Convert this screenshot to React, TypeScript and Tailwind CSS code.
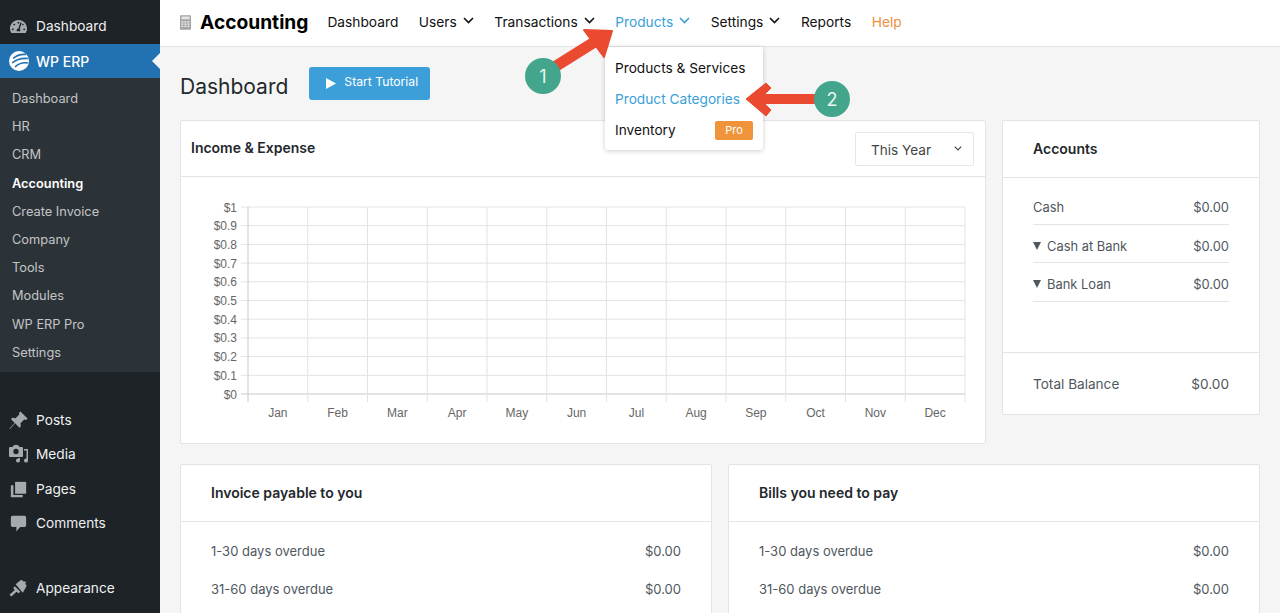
import { FaTachometerAlt } from "react-icons/fa";

const submenu = ["Dashboard", "HR", "CRM", "Accounting", "Create Invoice", "Company", "Tools", "Modules", "WP ERP Pro", "Settings"];
const months = ["Jan", "Feb", "Mar", "Apr", "May", "Jun", "Jul", "Aug", "Sep", "Oct", "Nov", "Dec"];
const ticks = ["$1", "$0.9", "$0.8", "$0.7", "$0.6", "$0.5", "$0.4", "$0.3", "$0.2", "$0.1", "$0"];

function PinIcon() {
  return (
    <svg viewBox="0 0 20 20" className="size-[19px]" fill="#a7aaad">
      <path d="M12 0.500L19.500 8 18 9.500 16 9 12 13 12.500 16 11 17.500 6.500 13 1 19 0.500 18.500 6 12.500 2 8.500 3.500 7 7 7.500 11 3.500 10.500 2z" />
    </svg>
  );
}

function MediaIcon() {
  return (
    <svg viewBox="0 0 19 19" className="size-[19px]" fill="#a7aaad">
      <path
        fillRule="evenodd"
        d="M1 2h2.500L5 0h4l1.500 2H13a1 1 0 0 1 1 1v8a1 1 0 0 1-1 1H1a1 1 0 0 1-1-1V3a1 1 0 0 1 1-1zm6 1.800a2.700 2.700 0 1 0 0 5.400 2.700 2.700 0 0 0 0-5.400z"
      />
      <path d="M15 4h4v11.500a2 2 0 1 1-1.500-1.900V5.500H15z" />
      <path d="M9.500 13H11v2.500a2 2 0 1 1-1.500-1.900z" />
    </svg>
  );
}

function PagesIcon() {
  return (
    <svg viewBox="0 0 20 20" className="size-[17px]" fill="#a7aaad">
      <path d="M6 1h13v14H6z" />
      <path d="M1 5h3v11.500h11V19H1z" />
    </svg>
  );
}

function CommentIcon() {
  return (
    <svg viewBox="0 0 20 20" className="size-[17px]" fill="#a7aaad">
      <path d="M3 1h14a2 2 0 0 1 2 2v9a2 2 0 0 1-2 2h-5l-4.500 5.500V14H3a2 2 0 0 1-2-2V3a2 2 0 0 1 2-2z" />
    </svg>
  );
}

function BrushIcon() {
  return (
    <svg viewBox="0 0 20 20" className="size-[19px]" fill="#a7aaad">
      <path d="M7 5.500L12.500 1l2 .500 1 1.500 2-.500.500 1.500-1 1 1.500 1.500-.500 2-3.500 6z" />
      <path d="M6 7.500l6 6-2 1.500-2-1.500-5.500 5L.500 16.500 6 11.500 4.500 9.500z" />
    </svg>
  );
}

function ErpLogo() {
  return (
    <svg viewBox="0 0 20 20" className="size-[20px]">
      <circle cx="10" cy="10" r="10" fill="#fff" />
      <path d="M4 7.500C8 4 12 3 17 3.500M3 12C8 8 13 7 19 7.500M6 16C10 12 14 11 19 12" stroke="#2271b1" strokeWidth="1.600" fill="none" />
    </svg>
  );
}

function CalculatorIcon() {
  return (
    <svg viewBox="0 0 12 16" className="h-[15px] w-[11px]">
      <rect width="12" height="16" rx="1" fill="#a3a3a3" />
      <rect x="1.500" y="1.500" width="9" height="3" fill="#e5e5e5" />
      {[6.5, 9, 11.5].map((y) =>
        [1.5, 4.8, 8.1].map((x) => <rect key={`${x}-${y}`} x={x} y={y} width="2.200" height="1.500" fill="#efefef" />)
      )}
    </svg>
  );
}

function Caret({ className }: { className: string }) {
  return (
    <svg viewBox="0 0 11 7" className={className} fill="none" stroke="currentColor" strokeWidth="1.600">
      <path d="M1 1l4.500 4.500L10 1" />
    </svg>
  );
}

function MenuRow({ icon, label }: { icon: React.ReactNode; label: string }) {
  return (
    <div className="flex h-[34.500px] items-center text-[13.7px] text-[#f0f0f1]">
      <span className="flex w-[36px] shrink-0 justify-center pl-[1px]">{icon}</span>
      {label}
    </div>
  );
}

function Sidebar() {
  return (
    <aside className="flex w-[160px] shrink-0 flex-col bg-[#1d2327]">
      <div className="flex h-[44px] items-center pt-[8px] text-[13.7px] text-[#f0f0f1]">
        <span className="flex w-[36px] shrink-0 justify-center">
          <FaTachometerAlt className="size-[17px] text-[#a7aaad]" />
        </span>
        Dashboard
      </div>
      <div className="relative flex h-[34px] items-center bg-[#2271b1] text-[14px] font-medium text-white">
        <span className="flex w-[36px] shrink-0 justify-center pl-[2px]">
          <ErpLogo />
        </span>
        WP ERP
        <span className="absolute right-0 top-[9px] border-y-[8px] border-r-[8px] border-y-transparent border-r-[#f5f5f5]" />
      </div>
      <div className="flex h-[294px] flex-col bg-[#2c3338] pt-[6.600px]">
        {submenu.map((item) => (
          <div
            key={item}
            className={`flex h-[28.200px] items-center pl-[12px] text-[12.8px] ${item === "Accounting" ? "font-semibold text-white" : "text-[#c3c4c7]"}`}
          >
            {item}
          </div>
        ))}
      </div>
      <div className="mt-[31px]">
        <MenuRow icon={<PinIcon />} label="Posts" />
        <MenuRow icon={<MediaIcon />} label="Media" />
        <MenuRow icon={<PagesIcon />} label="Pages" />
        <MenuRow icon={<CommentIcon />} label="Comments" />
      </div>
      <div className="mt-[30px]">
        <MenuRow icon={<BrushIcon />} label="Appearance" />
      </div>
    </aside>
  );
}

function NavItem({ label, caret, className }: { label: string; caret?: boolean; className?: string }) {
  return (
    <span className={`flex items-center gap-[6px] ${className ?? "text-[#111]"}`}>
      {label}
      {caret && <Caret className="mb-[3px] h-[7px] w-[11px]" />}
    </span>
  );
}

function TopBar() {
  return (
    <header className="flex h-[47px] items-center border-b border-[#e2e4e7] bg-white pb-[2px] pl-[20px]">
      <CalculatorIcon />
      <h1 className="ml-[9px] mr-[19px] text-[19.2px] font-bold text-black">Accounting</h1>
      <nav className="flex items-center gap-[20.500px] text-[13.75px]">
        <NavItem label="Dashboard" />
        <NavItem label="Users" caret />
        <NavItem label="Transactions" caret />
        <NavItem label="Products" caret className="text-[#3a9fd8]" />
        <NavItem label="Settings" caret />
        <NavItem label="Reports" />
        <NavItem label="Help" className="text-[#ee8f3c]" />
      </nav>
    </header>
  );
}

function Chart() {
  const left = 248;
  const right = 965;
  const top = 207;
  const bottom = 394;
  const stepY = (bottom - top) / 10;
  const stepX = (right - left) / 12;
  return (
    <svg width="804" height="266" viewBox="181 177 804 266" className="block font-['Liberation_Sans',sans-serif]">
      {ticks.map((t, i) => {
        const y = top + i * stepY;
        return (
          <g key={t}>
            <line x1={241} x2={right} y1={y} y2={y} stroke={i === 10 ? "#c9c9c9" : "#e3e3e3"} />
            <text x={237} y={y + 4.500} textAnchor="end" fontSize="12" fill="#666">
              {t}
            </text>
          </g>
        );
      })}
      {months.map((m, i) => {
        const x = left + i * stepX;
        return (
          <g key={m}>
            <line x1={x} x2={x} y1={top} y2={402} stroke={i === 0 ? "#c9c9c9" : "#e3e3e3"} />
            <text x={x + stepX / 2} y={417} textAnchor="middle" fontSize="12" fill="#666">
              {m}
            </text>
          </g>
        );
      })}
      <line x1={right} x2={right} y1={top} y2={402} stroke="#e3e3e3" />
    </svg>
  );
}

function AccountRow({ label, caret, className }: { label: string; caret?: boolean; className: string }) {
  return (
    <div className={`flex items-end justify-between border-b border-[#e3e4e6] text-[12.9px] text-[#50575e] ${className}`}>
      <span className="flex items-center gap-[6px]">
        {caret && <span className="h-0 w-0 border-x-[4.500px] border-t-[8px] border-x-transparent border-t-[#50575e]" />}
        {label}
      </span>
      <span>$0.00</span>
    </div>
  );
}

function PayCard({ title }: { title: string }) {
  return (
    <section className="h-[200px] flex-1 rounded-[2px] border border-[#e2e4e7] bg-white">
      <h3 className="flex h-[57px] items-center border-b border-[#e2e4e7] pb-[2px] pl-[30px] text-[14px] font-semibold text-[#23282d]">{title}</h3>
      <div className="px-[30px] pt-[11px] text-[13px] text-[#50575e]">
        <div className="flex h-[38px] items-center justify-between">
          <span>1-30 days overdue</span>
          <span>$0.00</span>
        </div>
        <div className="flex h-[38px] items-center justify-between">
          <span>31-60 days overdue</span>
          <span>$0.00</span>
        </div>
      </div>
    </section>
  );
}

function Annotations() {
  return (
    <svg className="pointer-events-none absolute left-0 top-0" width="1280" height="613" viewBox="0 0 1280 613">
      <path d="M553 68L596 41" stroke="#ea4a30" strokeWidth="11" fill="none" />
      <path d="M584 30L612 31L604 57Z" fill="#ea4a30" stroke="#ea4a30" strokeWidth="2" strokeLinejoin="round" />
      <path d="M758 99H820" stroke="#ea4a30" strokeWidth="10" fill="none" />
      <path d="M746 99L766 83L771 88L760 99L771 110L766 116Z" fill="#ea4a30" stroke="#ea4a30" strokeWidth="1" strokeLinejoin="round" />
      <circle cx="543" cy="76" r="18" fill="#43a58c" />
      <circle cx="832" cy="99" r="18" fill="#43a58c" />
      <text x="543" y="82.500" textAnchor="middle" fontSize="18" fill="#e8f5f1">1</text>
      <text x="832" y="105.500" textAnchor="middle" fontSize="18" fill="#e8f5f1">2</text>
    </svg>
  );
}

function ProductsMenu() {
  return (
    <div className="absolute left-[605px] top-[47px] flex h-[103px] w-[158px] flex-col rounded-b-[3px] bg-white pl-[10px] pt-[6px] text-[13.7px] text-[#111] shadow-[0_1px_5px_rgba(0,0,0,0.2)]">
      <div className="flex h-[31px] items-center">Products &amp; Services</div>
      <div className="flex h-[31px] items-center text-[#3a9fd8]">Product Categories</div>
      <div className="flex h-[31px] items-center justify-between pr-[10px]">
        Inventory
        <span className="flex h-[19px] w-[38px] items-center justify-center rounded-[2px] bg-[#f0943c] text-[11px] text-white">Pro</span>
      </div>
    </div>
  );
}

export default function App() {
  return (
    <div className="relative flex h-[613px] w-[1280px] overflow-hidden bg-[#f5f5f5] font-['Inter',sans-serif]">
      <Sidebar />
      <main className="min-w-0 flex-1">
        <TopBar />
        <div className="px-[20px]">
          <div className="flex h-[73px] items-center">
            <h2 className="pt-[6px] text-[21px] text-[#23282d]">Dashboard</h2>
            <button className="ml-[21px] flex h-[33px] w-[121px] items-center gap-[8px] rounded-[3px] bg-[#3d9fd9] pb-[3px] pl-[17px] text-[12.2px] text-white">
              <svg viewBox="0 0 10 11" className="mt-[3px] h-[11px] w-[10px]" fill="#fff">
                <path d="M0 0l10 5.500L0 11z" />
              </svg>
              Start Tutorial
            </button>
          </div>
          <div className="flex gap-[16px]">
            <section className="h-[324px] w-[806px] shrink-0 rounded-[2px] border border-[#e2e4e7] bg-white">
              <div className="flex h-[56px] items-center justify-between border-b border-[#e2e4e7] pl-[10px] pr-[11px]">
                <h3 className="mb-[2px] text-[14px] font-semibold text-[#23282d]">Income &amp; Expense</h3>
                <div className="flex h-[34px] w-[119px] items-center justify-between rounded-[2px] border border-[#e6e7e9] pl-[15px] pr-[11px] pt-[3px] text-[13.6px] text-[#444]">
                  This Year
                  <Caret className="mb-[4px] h-[5px] w-[8px]" />
                </div>
              </div>
              <Chart />
            </section>
            <section className="flex h-[295px] flex-1 flex-col rounded-[2px] border border-[#e2e4e7] bg-white">
              <h3 className="flex h-[57px] shrink-0 items-center border-b border-[#e2e4e7] pb-[2px] pl-[30px] text-[14px] font-semibold text-[#23282d]">Accounts</h3>
              <div className="flex-1 px-[30px] pt-[10px]">
                <AccountRow label="Cash" className="h-[37px] pb-[7px]" />
                <AccountRow label="Cash at Bank" caret className="h-[38px] pb-[6px]" />
                <AccountRow label="Bank Loan" caret className="h-[39px] pb-[7px]" />
              </div>
              <div className="flex h-[62px] shrink-0 items-center justify-between border-t border-[#e2e4e7] px-[30px] pt-[1px] text-[13.6px] text-[#50575e]">
                <span>Total Balance</span>
                <span>$0.00</span>
              </div>
            </section>
          </div>
          <div className="mt-[20px] flex gap-[16px]">
            <PayCard title="Invoice payable to you" />
            <PayCard title="Bills you need to pay" />
          </div>
        </div>
      </main>
      <ProductsMenu />
      <Annotations />
    </div>
  );
}
